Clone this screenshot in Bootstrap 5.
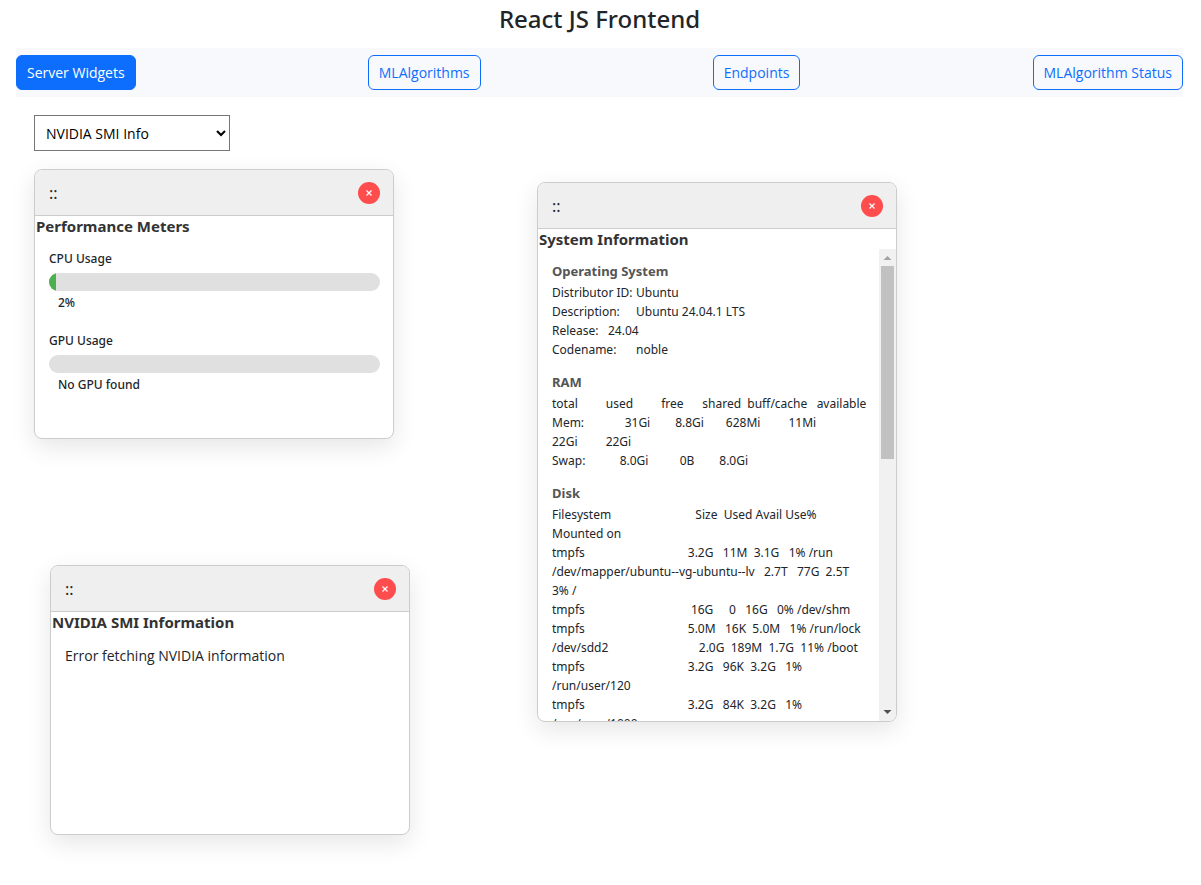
<!DOCTYPE html>
<html lang="en">
<head>
<meta charset="utf-8">
<meta name="viewport" content="width=device-width, initial-scale=1">
<title>React JS Frontend</title>
<link href="https://cdn.jsdelivr.net/npm/bootstrap@5.3.0/dist/css/bootstrap.min.css" rel="stylesheet">
<style>
  body { font-family: "Noto Sans", "Open Sans", sans-serif; font-size: 13px; min-height: 100vh; }
  .page { padding: 0 18px 0 16px; }
  .app-title { font-size: 24px; line-height: 29px; }
  .tab-bar { background: #f8f9fc; padding: 7px 0; margin-top: 15px; }
  .tab-bar .btn { font-family: "Open Sans", sans-serif; font-size: 14px; line-height: 21px; padding: 6px 10px; }
  .widget-picker { width: 196px; height: 36px; padding: 0 7px; font-family: "Open Sans", sans-serif; font-size: 14px; background: #fff; color: #000; border: 1px solid #767676; }
  .picker-row { padding: 18px; }
  .desktop { min-height: 700px; }
  .widget { width: 360px; height: 270px; background: #fff; border: 1px solid #ccc; border-radius: 8px; box-shadow: 0 8px 24px rgba(0, 0, 0, .1); }
  .widget-tall { height: 540px; }
  .widget-perf { left: 18px; top: 0; }
  .widget-sys { left: 521px; top: 13px; }
  .widget-smi { left: 34px; top: 396px; }
  .widget-head { height: 46px; flex: none; padding: 0 13px 0 14px; background: #efefef; border-bottom: 1px solid #ccc; cursor: move; }
  .drag-grip { font-size: 16px; line-height: 20px; }
  .close-btn { width: 22px; height: 22px; border: 0; border-radius: 50%; background: #ff4d4d; color: #fff; }
  .widget-title { font-size: 15px; line-height: 20px; font-weight: 700; color: #333; padding-left: 1px; margin: 0; flex: none; }
  .meter-box { padding: 13px 13px 0 14px; font-size: 12px; font-weight: 500; line-height: 20px; }
  .meter { height: 18px; border-radius: 9px; background: #e0e0e0; margin: 4px 0 2px; }
  .meter .progress-bar { background: #4caf50; }
  .meter-value { padding-left: 9px; margin-bottom: 18px; }
  .sys-text { padding: 12px 0 0 14px; min-height: 0; overflow: hidden; }
  .sys-text h6 { font-size: 13px; font-weight: 700; line-height: 20px; color: #555; margin: 0 0 2px; }
  .sys-text pre { font-family: inherit; font-size: 12px; line-height: 19px; tab-size: 28px; margin: 0 0 13px; overflow: visible; color: #212529; }
  .scroll-rail { width: 17px; flex: none; background: #f1f1f1; }
  .scroll-thumb { width: 13px; height: 193px; background: #c1c1c1; }
  .scroll-rail svg { display: block; flex: none; }
  .smi-text { font-family: "Open Sans", sans-serif; font-size: 14px; line-height: 20px; padding: 14px; margin: 0; }
</style>
</head>
<body>
<div class="container-fluid page">
  <header>
    <h1 class="app-title text-center pt-1 mb-0">React JS Frontend</h1>
    <nav class="tab-bar d-flex justify-content-between" aria-label="Sections">
      <button type="button" class="btn btn-primary">Server Widgets</button>
      <button type="button" class="btn btn-outline-primary">MLAlgorithms</button>
      <button type="button" class="btn btn-outline-primary">Endpoints</button>
      <button type="button" class="btn btn-outline-primary">MLAlgorithm Status</button>
    </nav>
  </header>
  <main>
    <div class="picker-row">
      <select id="widgetPicker" class="widget-picker d-block" aria-label="Widget"><option>NVIDIA SMI Info</option></select>
    </div>
    <div class="desktop position-relative">
      <section class="widget widget-perf position-absolute d-flex flex-column overflow-hidden">
        <div class="widget-head d-flex align-items-center justify-content-between">
          <span class="drag-grip">::</span>
          <button type="button" class="close-btn d-flex align-items-center justify-content-center p-0" aria-label="Close">
            <svg width="6" height="6" viewBox="0 0 6 6" stroke="currentColor" stroke-width="1.2"><path d="M.5.5l5 5M5.5.5l-5 5"/></svg>
          </button>
        </div>
        <h2 class="widget-title">Performance Meters</h2>
        <div class="meter-box">
          <div>CPU Usage</div>
          <div class="progress meter" role="progressbar" aria-label="CPU Usage" aria-valuenow="2" aria-valuemin="0" aria-valuemax="100"><div class="progress-bar" style="width:2%"></div></div>
          <div class="meter-value">2%</div>
          <div>GPU Usage</div>
          <div class="progress meter" role="progressbar" aria-label="GPU Usage" aria-valuenow="0" aria-valuemin="0" aria-valuemax="100"><div class="progress-bar" style="width:0%"></div></div>
          <div class="meter-value">No GPU found</div>
        </div>
      </section>

      <section class="widget widget-tall widget-sys position-absolute d-flex flex-column overflow-hidden">
        <div class="widget-head d-flex align-items-center justify-content-between">
          <span class="drag-grip">::</span>
          <button type="button" class="close-btn d-flex align-items-center justify-content-center p-0" aria-label="Close">
            <svg width="6" height="6" viewBox="0 0 6 6" stroke="currentColor" stroke-width="1.2"><path d="M.5.5l5 5M5.5.5l-5 5"/></svg>
          </button>
        </div>
        <h2 class="widget-title">System Information</h2>
        <div class="d-flex flex-grow-1 overflow-hidden">
          <div class="sys-text flex-grow-1">
            <h6>Operating System</h6>
<pre>Distributor ID:	Ubuntu
Description:	Ubuntu 24.04.1 LTS
Release:	24.04
Codename:	noble</pre>
            <h6>RAM</h6>
<pre>total         used         free      shared  buff/cache   available
Mem:             31Gi        8.8Gi       628Mi         11Mi
22Gi         22Gi
Swap:           8.0Gi          0B        8.0Gi</pre>
            <h6>Disk</h6>
<pre>Filesystem                           Size  Used Avail Use%
Mounted on
tmpfs                                 3.2G   11M  3.1G   1% /run
/dev/mapper/ubuntu--vg-ubuntu--lv   2.7T   77G  2.5T
3% /
tmpfs                                  16G     0   16G   0% /dev/shm
tmpfs                                 5.0M   16K  5.0M   1% /run/lock
/dev/sdd2                             2.0G  189M  1.7G  11% /boot
tmpfs                                 3.2G   96K  3.2G   1%
/run/user/120
tmpfs                                 3.2G   84K  3.2G   1%
/run/user/1000</pre>
          </div>
          <div class="scroll-rail d-flex flex-column align-items-center" aria-hidden="true">
            <svg width="17" height="17" viewBox="0 0 17 17"><path d="M4.500 11L8.500 7l4 4z" fill="#a3a3a3"/></svg>
            <div class="scroll-thumb"></div>
            <svg class="mt-auto" width="17" height="17" viewBox="0 0 17 17"><path d="M4.500 6h8l-4 4z" fill="#505050"/></svg>
          </div>
        </div>
      </section>

      <section class="widget widget-smi position-absolute d-flex flex-column overflow-hidden">
        <div class="widget-head d-flex align-items-center justify-content-between">
          <span class="drag-grip">::</span>
          <button type="button" class="close-btn d-flex align-items-center justify-content-center p-0" aria-label="Close">
            <svg width="6" height="6" viewBox="0 0 6 6" stroke="currentColor" stroke-width="1.2"><path d="M.5.5l5 5M5.5.5l-5 5"/></svg>
          </button>
        </div>
        <h2 class="widget-title">NVIDIA SMI Information</h2>
        <p class="smi-text">Error fetching NVIDIA information</p>
      </section>
    </div>
  </main>
</div>
<script src="https://cdn.jsdelivr.net/npm/bootstrap@5.3.0/dist/js/bootstrap.bundle.min.js"></script>
</body>
</html>
